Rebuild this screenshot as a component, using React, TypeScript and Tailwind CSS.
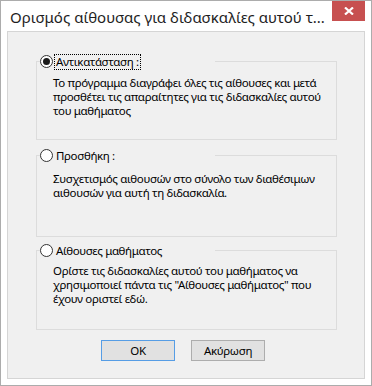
import { ReactNode } from "react";

function Radio({ checked }: { checked?: boolean }) {
  return (
    <svg width="13" height="13" viewBox="0 0 13 13" className="shrink-0">
      <circle cx="6.5" cy="6.5" r="6" fill="#ffffff" stroke="#333333" strokeWidth="1" />
      {checked ? <circle cx="6.5" cy="6.5" r="3.5" fill="#1a1a1a" /> : null}
    </svg>
  );
}

function Option({
  label,
  checked,
  focused,
  className,
  textClass,
  children,
}: {
  label: string;
  checked?: boolean;
  focused?: boolean;
  className: string;
  textClass: string;
  children: ReactNode;
}) {
  return (
    <fieldset className={`border border-[#dcdcdc] ${className}`}>
      <legend className="ml-[3px] flex h-[17px] w-[175px] items-center bg-[#f0f0f0]">
        <Radio checked={checked} />
        <span
          className={`ml-[2px] px-[1px] leading-[14px] ${
            focused ? "outline-1 outline-dotted outline-black" : ""
          }`}
        >
          {label}
        </span>
      </legend>
      <p className={`whitespace-nowrap pl-[16px] leading-[14px] ${textClass}`}>{children}</p>
    </fieldset>
  );
}

export default function App() {
  return (
    <div className="flex h-[386px] w-[372px] flex-col border border-[#acacac] bg-white font-['Noto_Sans',sans-serif] text-[11.5px] tracking-[-0.35px] text-black">
      <div className="flex h-[30px] shrink-0 items-start">
        <div className="truncate pl-[9px] pt-[6px] text-[15px] leading-[20px] tracking-normal text-[#1e1e1e]">
          Ορισμός αίθουσας για διδασκαλίες αυτού τ...
        </div>
        <button className="ml-auto mr-[6px] flex h-[20px] w-[33px] shrink-0 items-center justify-center bg-[#c75050]">
          <svg width="10" height="8" viewBox="0 0 10 8">
            <path d="M1 0.5 L9 7.5 M9 0.5 L1 7.5" stroke="#ffffff" strokeWidth="2.2" />
          </svg>
        </button>
      </div>

      <div className="mx-[6px] flex h-[348px] flex-col border border-[#d5d5d5] bg-[#f0f0f0] pl-[28px] pr-[27px] pt-[21px]">
        <Option
          label="Αντικατάσταση :"
          checked
          focused
          className="h-[87px]"
          textClass="mt-[6px]"
        >
          Το πρόγραμμα διαγράφει όλες τις αίθουσες και μετά
          <br />
          προσθέτει τις απαραίτητες για τις διδασκαλίες αυτού
          <br />
          του μαθήματος
        </Option>
        <Option label="Προσθήκη :" className="mt-[7px] h-[90px]" textClass="mt-[8px]">
          Συσχετισμός αιθουσών στο σύνολο των διαθέσιμων
          <br />
          αιθουσών για αυτή τη διδασκαλία.
        </Option>
        <Option label="Αίθουσες μαθήματος" className="mt-[5px] h-[88px]" textClass="mt-[5px]">
          Ορίστε τις διδασκαλίες αυτού του μαθήματος να
          <br />
          χρησιμοποιεί πάντα τις "Αίθουσες μαθήματος" που
          <br />
          έχουν οριστεί εδώ.
        </Option>

        <div className="mt-[10px] flex gap-[16px] pl-[65px]">
          <button className="h-[21px] w-[74px] border border-[#569de5] bg-[#e1e1e1] leading-[19px]">OK</button>
          <button className="h-[21px] w-[74px] border border-[#adadad] bg-[#e1e1e1] leading-[19px]">
            Ακύρωση
          </button>
        </div>
      </div>
    </div>
  );
}
